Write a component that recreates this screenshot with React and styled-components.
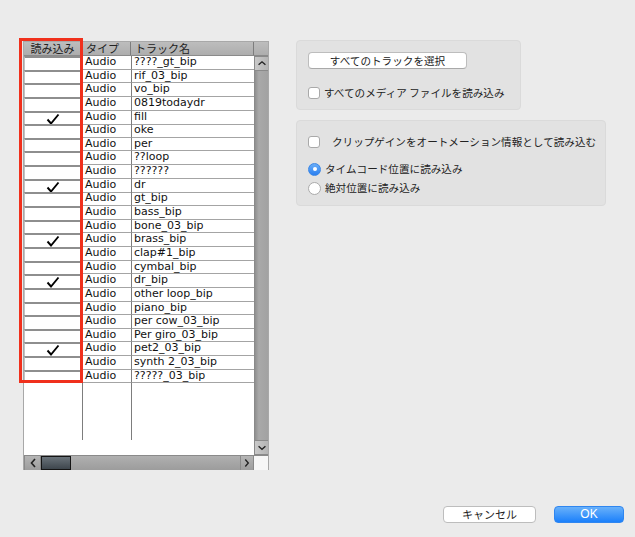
import React from 'react'
import styled, { createGlobalStyle } from 'styled-components'

const tracks = [
  { name: '????_gt_bip' },
  { name: 'rif_03_bip' },
  { name: 'vo_bip' },
  { name: '0819todaydr' },
  { name: 'fill', on: true },
  { name: 'oke' },
  { name: 'per' },
  { name: '??loop' },
  { name: '??????' },
  { name: 'dr', on: true },
  { name: 'gt_bip' },
  { name: 'bass_bip' },
  { name: 'bone_03_bip' },
  { name: 'brass_bip', on: true },
  { name: 'clap#1_bip' },
  { name: 'cymbal_bip' },
  { name: 'dr_bip', on: true },
  { name: 'other loop_bip' },
  { name: 'piano_bip' },
  { name: 'per cow_03_bip' },
  { name: 'Per giro_03_bip' },
  { name: 'pet2_03_bip', on: true },
  { name: 'synth 2_03_bip' },
  { name: '?????_03_bip' },
]

const Check = () => (
  <svg width="14" height="12" viewBox="0 0 14 12">
    <path d="M1.5 6.5 L5 10.5 L12.5 1.5" fill="none" stroke="#000" strokeWidth="1.9" />
  </svg>
)

const Chevron = ({ dir }) => {
  const d = {
    up: 'M3 8 L7 4.5 L11 8',
    down: 'M3 5 L7 8.5 L11 5',
    left: 'M9 3 L5.5 7 L9 11',
    right: 'M5 3 L8.5 7 L5 11',
  }[dir]
  return (
    <svg width="14" height="14" viewBox="0 0 14 14">
      <path d={d} fill="none" stroke="#222" strokeWidth="1.6" />
    </svg>
  )
}

const App = () => {
  return (
    <Window>
      <GlobalStyle />
      <Content>
        <TableWrap>
          <Table>
            <Header>
              <HeadCell center>読み込み</HeadCell>
              <HeadCell>タイプ</HeadCell>
              <HeadCell>トラック名</HeadCell>
              <HeadCell last />
            </Header>
            <Body>
              <Rows>
                {tracks.map((t) => (
                  <Row key={t.name}>
                    <LoadCell>{t.on && <Check />}</LoadCell>
                    <TypeCell>Audio</TypeCell>
                    <NameCell>{t.name}</NameCell>
                  </Row>
                ))}
                <Filler>
                  <FillCol />
                  <FillCol line />
                  <FillCol line />
                </Filler>
              </Rows>
              <VScroll>
                <ArrowBtn>
                  <Chevron dir="up" />
                </ArrowBtn>
                <VTrack />
                <ArrowBtn>
                  <Chevron dir="down" />
                </ArrowBtn>
              </VScroll>
            </Body>
            <HScroll>
              <HArrow>
                <Chevron dir="left" />
              </HArrow>
              <Thumb />
              <HTrack />
              <HArrow>
                <Chevron dir="right" />
              </HArrow>
              <Corner />
            </HScroll>
          </Table>
          <Highlight />
        </TableWrap>

        <Side>
          <Panel width={225} pad="11px 11px 9px 11px">
            <PushButton>すべてのトラックを選択</PushButton>
            <OptionRow top={17}>
              <CheckBox />
              <Label>すべてのメディア ファイルを読み込み</Label>
            </OptionRow>
          </Panel>
          <Panel width={310} pad="14px 11px 10px 11px">
            <OptionRow>
              <CheckBox />
              <Label gap={12}>クリップゲインをオートメーション情報として読み込む</Label>
            </OptionRow>
            <OptionRow top={13}>
              <Radio selected />
              <Label>タイムコード位置に読み込み</Label>
            </OptionRow>
            <OptionRow top={5}>
              <Radio />
              <Label>絶対位置に読み込み</Label>
            </OptionRow>
          </Panel>
        </Side>
      </Content>

      <Footer>
        <DialogButton>キャンセル</DialogButton>
        <DialogButton primary>OK</DialogButton>
      </Footer>
    </Window>
  )
}

const GlobalStyle = createGlobalStyle`
  html, body {
    margin: 0;
    padding: 0;
    background: #ebebeb;
  }
  * {
    box-sizing: border-box;
  }
`

const Window = styled.div`
  width: 635px;
  height: 537px;
  display: flex;
  flex-direction: column;
  background: #ebebeb;
  font-family: 'DejaVu Sans', 'Noto Sans CJK JP', sans-serif;
  color: #111;
  overflow: hidden;
`

const Content = styled.div`
  display: flex;
  padding: 40px 0 0 23px;
  gap: 27px;
`

const TableWrap = styled.div`
  position: relative;
  margin-top: 1px;
`

const Table = styled.div`
  width: 246px;
  height: 429px;
  border: 1px solid #a8a8a8;
  display: flex;
  flex-direction: column;
  background: #fff;
`

const Header = styled.div`
  height: 14px;
  display: grid;
  grid-template-columns: 58px 49px 123px 14px;
  background: linear-gradient(#bdbdbd, #adadad);
  border-bottom: 1px solid #8a8a8a;
  flex-shrink: 0;
`

const HeadCell = styled.div`
  font-family: 'Noto Sans CJK JP', sans-serif;
  font-size: 11px;
  line-height: 13px;
  color: #222;
  padding-left: ${(p) => (p.center ? '0' : '4px')};
  text-align: ${(p) => (p.center ? 'center' : 'left')};
  border-right: ${(p) => (p.last ? 'none' : '1px solid #7d7d7d')};
  white-space: nowrap;
`

const Body = styled.div`
  flex: 1;
  display: flex;
  min-height: 0;
`

const Rows = styled.div`
  width: 230px;
  display: flex;
  flex-direction: column;
`

const Row = styled.div`
  height: 13.65px;
  display: grid;
  grid-template-columns: 58px 49px 123px;
  font-size: 11px;
  line-height: 12px;
`

const LoadCell = styled.div`
  background: #fff;
  border-top: 2px solid #8e8e8e;
  border-left: 1px solid #c4c4c4;
  border-right: 2px solid #9a9a9a;
  display: flex;
  justify-content: center;
  align-items: center;
`

const TypeCell = styled.div`
  padding-left: 2px;
  border-bottom: 1px solid #a4a4a4;
  border-left: 1px solid #7d7d7d;
  white-space: nowrap;
`

const NameCell = styled.div`
  padding-left: 2px;
  border-bottom: 1px solid #a4a4a4;
  border-left: 1px solid #7d7d7d;
  white-space: nowrap;
  overflow: hidden;
`

const Filler = styled.div`
  flex: 1;
  display: grid;
  grid-template-columns: 58px 49px 123px;
  margin-bottom: 15px;
`

const FillCol = styled.div`
  border-left: ${(p) => (p.line ? '1px solid #7d7d7d' : 'none')};
`

const VScroll = styled.div`
  width: 14px;
  display: flex;
  flex-direction: column;
  border-left: 1px solid #8a8a8a;
`

const ArrowBtn = styled.div`
  height: 15px;
  background: linear-gradient(90deg, #c9c9c9, #b4b4b4);
  border-top: 1px solid #8a8a8a;
  border-bottom: 1px solid #8a8a8a;
  display: flex;
  justify-content: center;
  align-items: center;
  flex-shrink: 0;
  & svg {
    width: 12px;
  }
`

const VTrack = styled.div`
  flex: 1;
  background: linear-gradient(90deg, #8f8f8f, #a9a9a9 30%, #a2a2a2);
`

const HScroll = styled.div`
  height: 14px;
  display: grid;
  grid-template-columns: 17px 30px 1fr 14px 14px;
  border-top: 1px solid #8a8a8a;
  flex-shrink: 0;
`

const HArrow = styled.div`
  background: linear-gradient(#b5b5b5, #9d9d9d);
  border-right: 1px solid #8a8a8a;
  border-left: 1px solid #8a8a8a;
  display: flex;
  justify-content: center;
  align-items: center;
`

const Thumb = styled.div`
  background: linear-gradient(#6a737a, #3e464d);
  border: 1px solid #151515;
`

const HTrack = styled.div`
  background: linear-gradient(#b0b0b0, #9c9c9c);
`

const Corner = styled.div`
  background: #f7f7f7;
`

const Highlight = styled.div`
  position: absolute;
  left: -4px;
  top: -3px;
  width: 64px;
  height: 345px;
  border: 3px solid #f0301c;
  pointer-events: none;
`

const Side = styled.div`
  display: flex;
  flex-direction: column;
  gap: 10px;
`

const Panel = styled.div`
  width: ${(p) => p.width}px;
  padding: ${(p) => p.pad};
  background: #e2e2e2;
  border: 1px solid #dadada;
  border-radius: 4px;
  display: flex;
  flex-direction: column;
  align-items: flex-start;
`

const PushButton = styled.div`
  width: 159px;
  height: 17px;
  background: #fff;
  border: 1px solid #bdbdbd;
  border-bottom-color: #a9a9a9;
  border-radius: 4px;
  font-family: 'Noto Sans CJK JP', sans-serif;
  font-size: 10.6px;
  line-height: 15px;
  text-align: center;
  color: #222;
`

const OptionRow = styled.div`
  display: flex;
  align-items: center;
  margin-top: ${(p) => p.top || 0}px;
  height: 14px;
`

const CheckBox = styled.div`
  width: 12px;
  height: 12px;
  background: #fff;
  border: 1px solid #a9a9a9;
  border-radius: 3px;
  flex-shrink: 0;
`

const Radio = styled.div`
  width: 13px;
  height: 13px;
  border-radius: 50%;
  flex-shrink: 0;
  position: relative;
  background: ${(p) =>
    p.selected ? 'linear-gradient(#6aaef8, #2a7ff0)' : '#fff'};
  border: 1px solid ${(p) => (p.selected ? '#3a86e6' : '#aaa')};
  &::after {
    content: '';
    display: ${(p) => (p.selected ? 'block' : 'none')};
    position: absolute;
    left: 3.5px;
    top: 3.5px;
    width: 4px;
    height: 4px;
    border-radius: 50%;
    background: #fff;
  }
`

const Label = styled.span`
  font-family: 'Noto Sans CJK JP', sans-serif;
  font-size: 10.6px;
  line-height: 14px;
  color: #222;
  margin-left: ${(p) => p.gap || 4}px;
  white-space: nowrap;
`

const Footer = styled.div`
  margin-top: auto;
  display: flex;
  justify-content: flex-end;
  gap: 18px;
  padding: 0 11px 14px 0;
`

const DialogButton = styled.div`
  width: ${(p) => (p.primary ? '70px' : '93px')};
  height: 17px;
  border-radius: 4px;
  font-family: ${(p) => (p.primary ? "'Liberation Sans', sans-serif" : "'Noto Sans CJK JP', sans-serif")};
  font-size: ${(p) => (p.primary ? '12px' : '11px')};
  line-height: 15px;
  text-align: center;
  color: ${(p) => (p.primary ? '#fff' : '#222')};
  background: ${(p) =>
    p.primary ? 'linear-gradient(#69b1fa, #1b80fb)' : '#fff'};
  border: 1px solid ${(p) => (p.primary ? '#2f86f0' : '#bdbdbd')};
`

export default App
